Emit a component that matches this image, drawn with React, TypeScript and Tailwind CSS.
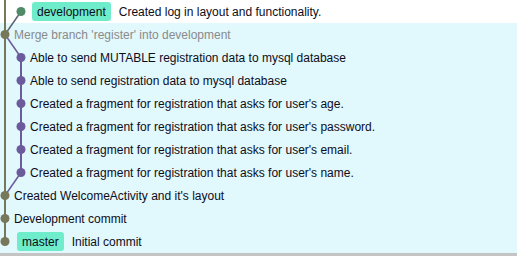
import React from 'react';

type Row = {
  text: string;
  indent: number;
  label?: string;
  muted?: boolean;
  white?: boolean;
};

const rows: Row[] = [
  { text: 'Created log in layout and functionality.', indent: 32, label: 'development', white: true },
  { text: "Merge branch 'register' into development", indent: 14, muted: true },
  { text: 'Able to send MUTABLE registration data to mysql database', indent: 30 },
  { text: 'Able to send registration data to mysql database', indent: 30 },
  { text: "Created a fragment for registration that asks for user's age.", indent: 30 },
  { text: "Created a fragment for registration that asks for user's password.", indent: 30 },
  { text: "Created a fragment for registration that asks for user's email.", indent: 30 },
  { text: "Created a fragment for registration that asks for user's name.", indent: 30 },
  { text: "Created WelcomeActivity and it's layout", indent: 14 },
  { text: 'Development commit', indent: 14 },
  { text: 'Initial commit', indent: 17, label: 'master' },
];

const ROW = 23;
const cy = (i: number) => i * ROW + 11.5;

const Graph = () => {
  const olive = '#77785a';
  const purple = '#6b5b9c';
  return (
    <svg className="absolute left-0 top-0 pointer-events-none" width="30" height="253">
      {/* main line */}
      <line x1="5" y1="0" x2="5" y2={cy(10)} stroke={olive} strokeWidth="2" />
      {/* development tip into merge */}
      <line x1="21" y1={cy(0)} x2="5" y2={cy(1)} stroke="#5d6570" strokeWidth="1.5" />
      {/* register branch */}
      <line x1="5" y1={cy(1)} x2="21" y2={cy(2)} stroke={purple} strokeWidth="1.5" />
      <line x1="21" y1={cy(2)} x2="21" y2={cy(7)} stroke={purple} strokeWidth="2" />
      <line x1="21" y1={cy(7)} x2="5" y2={cy(8)} stroke={purple} strokeWidth="1.5" />
      <circle cx="21" cy={cy(0)} r="4.5" fill="#4f8b66" />
      {[2, 3, 4, 5, 6, 7].map((i) => (
        <circle key={i} cx="21" cy={cy(i)} r="4.5" fill={purple} />
      ))}
      {[1, 8, 9, 10].map((i) => (
        <circle key={i} cx="5" cy={cy(i)} r="4.5" fill={olive} />
      ))}
    </svg>
  );
}

export default function App() {
  return (
    <div className="w-[517px] h-[256px] overflow-hidden bg-[#e1f8fd] font-['Liberation_Sans',Arial,sans-serif] text-[12px] text-[#0d0d1a]">
      <div className="relative">
        {rows.map((r, i) => (
          <div
            key={i}
            className={`h-[23px] flex items-center whitespace-nowrap ${r.white ? 'bg-white' : ''} ${r.muted ? 'text-[#8a8a8a]' : ''}`}
            style={{ paddingLeft: r.indent }}
          >
            {r.label && (
              <span className="mr-[8px] rounded-[3px] bg-[#6fecc9] px-[5px] h-[19px] flex items-center">{r.label}</span>
            )}
            <span>{r.text}</span>
          </div>
        ))}
        <Graph />
      </div>
      <div className="h-[3px] bg-[#c4c4c4]" />
    </div>
  );
}
